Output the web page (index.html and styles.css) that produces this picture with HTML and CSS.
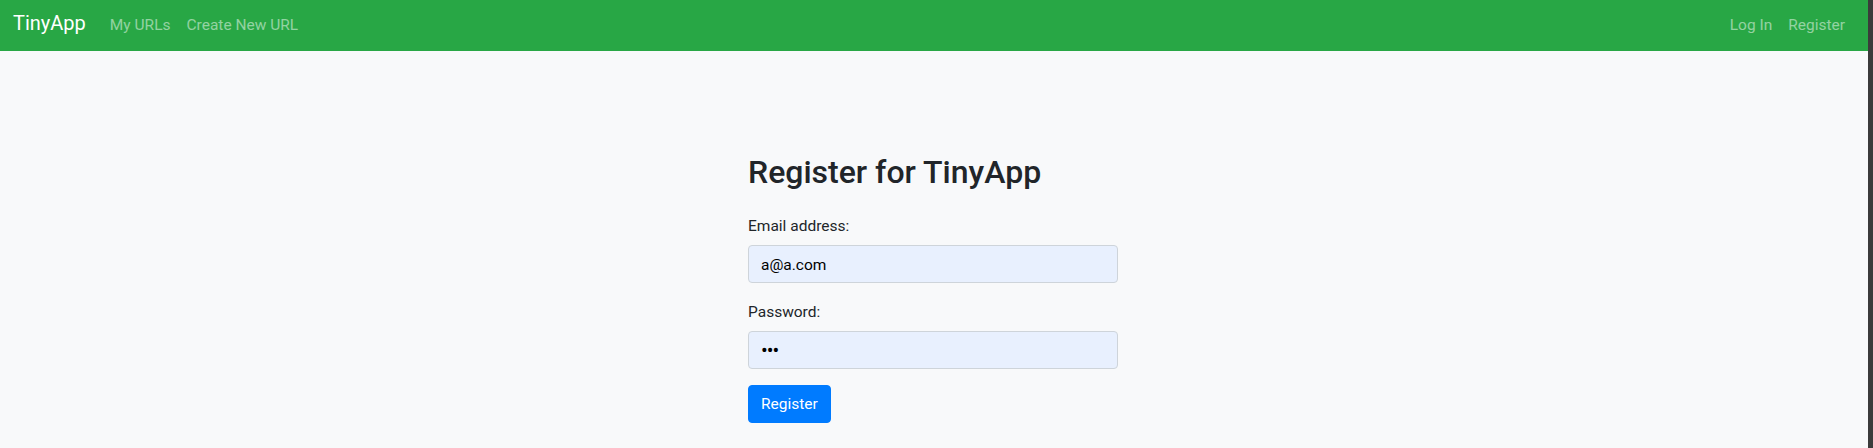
FILE: index.html
```html
<!DOCTYPE html>
<html lang="en">
<head>
<meta charset="utf-8">
<title>TinyApp</title>
<link rel="stylesheet" href="styles.css">
</head>
<body>
<div class="page">
  <nav class="navbar">
    <a class="brand" href="#">TinyApp</a>
    <div class="nav-left">
      <a class="nav-link" href="#">My URLs</a>
      <a class="nav-link" href="#">Create New URL</a>
    </div>
    <div class="nav-right">
      <a class="nav-link" href="#">Log In</a>
      <a class="nav-link" href="#">Register</a>
    </div>
  </nav>
  <main class="main">
    <div class="panel">
      <h2 class="title">Register for TinyApp</h2>
      <form class="form">
        <div class="form-group">
          <label class="label" for="email">Email address:</label>
          <input class="input" id="email" type="email" value="a@a.com">
        </div>
        <div class="form-group">
          <label class="label" for="password">Password:</label>
          <input class="input input-password" id="password" type="password" value="abc">
        </div>
        <button class="btn" type="button">Register</button>
      </form>
    </div>
  </main>
</div>
<div class="strip"></div>
</body>
</html>
```
FILE: styles.css
```css
html, body {
  margin: 0;
  padding: 0;
  height: 100%;
  overflow: hidden;
}
body {
  display: flex;
  background: #f8f9fa;
  font-family: Roboto, "Liberation Sans", sans-serif;
  color: #212529;
}
.page {
  flex: 1;
  min-width: 0;
  display: flex;
  flex-direction: column;
}
.strip {
  width: 5px;
  flex: none;
  background: #3b3b3b;
}
.navbar {
  height: 51px;
  box-sizing: border-box;
  background: #28a745;
  display: flex;
  align-items: baseline;
  padding: 8px 13px 0 13px;
}
.brand {
  font-size: 20px;
  line-height: 30px;
  color: #fff;
  text-decoration: none;
  margin-right: 16px;
}
.nav-left, .nav-right {
  display: flex;
  align-items: baseline;
}
.nav-right {
  margin-left: auto;
  margin-right: 2px;
}
.nav-link {
  font-size: 15.5px;
  line-height: 24px;
  padding: 0 8px;
  color: rgba(255, 255, 255, 0.5);
  text-decoration: none;
}
.main {
  flex: 1;
  display: flex;
  justify-content: center;
  padding: 102px 2px 0 0;
}
.panel {
  width: 370px;
}
.title {
  margin: 0 0 23px 0;
  font-size: 32px;
  font-weight: 500;
  line-height: 38px;
}
.form {
  margin: 0;
}
.form-group {
  display: flex;
  flex-direction: column;
  margin-bottom: 17px;
}
.form-group + .form-group {
  margin-bottom: 16px;
}
.label {
  font-size: 15.5px;
  line-height: 24px;
  margin-bottom: 7px;
}
.input {
  box-sizing: border-box;
  height: 38px;
  width: 100%;
  margin: 0;
  padding: 7px 12px 5px 12px;
  font-family: Roboto, "Liberation Sans", sans-serif;
  font-size: 15.5px;
  line-height: 24px;
  color: #000;
  background: #e8f0fe;
  border: 1px solid #ced4da;
  border-radius: 4px;
  outline: none;
}
.input-password {
  font-size: 20px;
  letter-spacing: -1px;
  padding: 5px 12px 5px 12px;
}
.btn {
  box-sizing: border-box;
  height: 38px;
  padding: 6px 12px;
  margin: 0;
  font-family: Roboto, "Liberation Sans", sans-serif;
  font-size: 15.5px;
  line-height: 24px;
  color: #fff;
  background: #007bff;
  border: 1px solid #007bff;
  border-radius: 4px;
  cursor: pointer;
}
```
